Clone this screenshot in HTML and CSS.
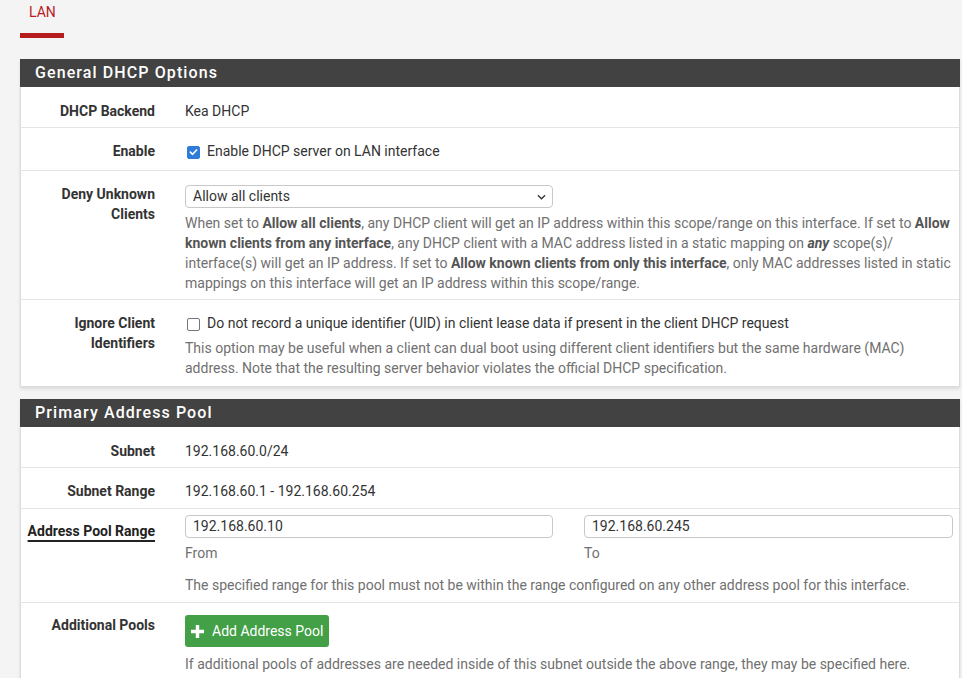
FILE: index.html
```html
<!DOCTYPE html>
<html lang="en">
<head>
<meta charset="utf-8">
<title>DHCP Server: LAN</title>
<link rel="stylesheet" href="styles.css">
</head>
<body>
<div class="page">
  <nav class="tabs">
    <a class="tab active">LAN</a>
  </nav>

  <section class="panel">
    <h2 class="panel-heading">General DHCP Options</h2>
    <div class="panel-body">
      <div class="form-row static-row">
        <div class="label">DHCP Backend</div>
        <div class="content"><div class="static">Kea DHCP</div></div>
      </div>
      <div class="form-row check-row">
        <div class="label">Enable</div>
        <div class="content">
          <label class="check"><span class="box checked"><svg viewBox="0 0 12 12" width="12" height="12"><path d="M2.6 6.2 L5 8.5 L9.4 3.8" fill="none" stroke="#fff" stroke-width="1.8" stroke-linecap="round" stroke-linejoin="round"/></svg></span>Enable DHCP server on LAN interface</label>
        </div>
      </div>
      <div class="form-row tight">
        <div class="label">Deny Unknown Clients</div>
        <div class="content">
          <div class="half">
            <div class="select"><span>Allow all clients</span><svg class="chev" viewBox="0 0 10 6" width="9" height="6"><path d="M1 1 L5 5 L9 1" fill="none" stroke="#333" stroke-width="1.4"/></svg></div>
          </div>
          <p class="help">When set to <b>Allow all clients</b>, any DHCP client will get an IP address within this scope/range on this interface. If set to <b>Allow known clients from any interface</b>, any DHCP client with a MAC address listed in a static mapping on <b><i>any</i></b> scope(s)/ interface(s) will get an IP address. If set to <b>Allow known clients from only this interface</b>, only MAC addresses listed in static mappings on this interface will get an IP address within this scope/range.</p>
        </div>
      </div>
      <div class="form-row last">
        <div class="label">Ignore Client Identifiers</div>
        <div class="content">
          <label class="check"><span class="box"></span>Do not record a unique identifier (UID) in client lease data if present in the client DHCP request</label>
          <p class="help">This option may be useful when a client can dual boot using different client identifiers but the same hardware (MAC) address. Note that the resulting server behavior violates the official DHCP specification.</p>
        </div>
      </div>
    </div>
  </section>

  <section class="panel">
    <h2 class="panel-heading">Primary Address Pool</h2>
    <div class="panel-body">
      <div class="form-row static-row">
        <div class="label">Subnet</div>
        <div class="content"><div class="static">192.168.60.0/24</div></div>
      </div>
      <div class="form-row">
        <div class="label">Subnet Range</div>
        <div class="content"><div class="static">192.168.60.1 - 192.168.60.254</div></div>
      </div>
      <div class="form-row raised">
        <div class="label"><span class="underlined">Address Pool Range</span></div>
        <div class="content">
          <div class="pair">
            <div>
              <div class="input">192.168.60.10</div>
              <div class="sub">From</div>
            </div>
            <div>
              <div class="input">192.168.60.245</div>
              <div class="sub">To</div>
            </div>
          </div>
          <p class="help spaced">The specified range for this pool must not be within the range configured on any other address pool for this interface.</p>
        </div>
      </div>
      <div class="form-row raised">
        <div class="label">Additional Pools</div>
        <div class="content">
          <button class="btn-success" type="button"><svg viewBox="0 0 15 15" width="15" height="15"><path d="M7.5 1 V14 M1 7.5 H14" stroke="#fff" stroke-width="3.4"/></svg>Add Address Pool</button>
          <p class="help btn-help">If additional pools of addresses are needed inside of this subnet outside the above range, they may be specified here.</p>
        </div>
      </div>
    </div>
  </section>
</div>
</body>
</html>
```

FILE: styles.css
```css
* { box-sizing: border-box; }

html, body {
  margin: 0;
  padding: 0;
  background: #f4f4f4;
  font-family: Roboto, "Liberation Sans", sans-serif;
  font-size: 14px;
  line-height: 20px;
  color: #212121;
}

.page {
  padding: 0 0 0 20px;
  width: 960px;
}

.tabs {
  display: flex;
  height: 59px;
  align-items: flex-start;
}

.tab {
  display: block;
  padding: 2px 9px 11px;
  height: 38px;
  width: 44px;
  text-align: center;
  color: #b71c1c;
  font-size: 14px;
  line-height: 20px;
  border-bottom: 5px solid #b71c1c;
}

.panel {
  background: #fff;
  border: 1px solid #dcdcdc;
  border-top: none;
  box-shadow: 0 2px 3px rgba(0,0,0,0.10);
  margin-bottom: 12px;
}

.panel-heading {
  background: #424242;
  color: #fff;
  font-size: 16px;
  font-weight: 500;
  letter-spacing: 1.1px;
  line-height: 28px;
  height: 28px;
  padding: 0 15px;
  margin: 0 -1px;
}

.form-row {
  display: grid;
  grid-template-columns: 149px 1fr;
  padding: 6px 0 7px;
  border-bottom: 1px solid #e4e4e4;
}

.form-row.static-row { padding: 7px 0 6px; }
.form-row.check-row { padding-bottom: 9px; }
.form-row.tight { padding-bottom: 6px; }
.form-row.last { border-bottom: none; padding-bottom: 8px; }
.form-row.raised { padding-top: 5px; padding-bottom: 7px; }

.label {
  text-align: right;
  padding: 7px 15px 0 0;
  font-weight: 700;
  color: #333;
}

.content {
  padding: 0 6px 0 15px;
  min-width: 0;
}

.static {
  padding-top: 7px;
  min-height: 27px;
  color: #333;
}

.check {
  display: flex;
  align-items: center;
  padding-top: 7px;
  color: #333;
}

.box {
  width: 13px;
  height: 13px;
  border: 1.5px solid #767676;
  border-radius: 2px;
  margin: 2px 7px 0 2px;
  display: inline-flex;
  align-items: center;
  justify-content: center;
  flex: none;
}

.box.checked {
  background: #2f7bd9;
  border-color: #2f7bd9;
}

.half {
  width: 368px;
  padding-top: 8px;
}

.select {
  height: 23px;
  border: 1px solid #c8c8c8;
  border-radius: 4px;
  padding: 0 6px 0 7px;
  display: flex;
  align-items: center;
  justify-content: space-between;
  color: #333;
  line-height: 21px;
}

.chev { flex: none; }

.help {
  margin: 5px 0 0;
  color: #707070;
}

.help b { color: #555; }

.help.spaced { margin-top: 12px; }

.pair {
  display: grid;
  grid-template-columns: 368px 369px;
  column-gap: 31px;
  padding-top: 1px;
}

.input {
  height: 23px;
  border: 1px solid #c8c8c8;
  border-radius: 4px;
  padding: 0 7px;
  line-height: 21px;
  color: #333;
}

.sub {
  margin-top: 5px;
  color: #707070;
}

.underlined {
  text-decoration: underline;
  text-decoration-thickness: 1.5px;
  text-underline-offset: 4px;
  color: #222;
}

.btn-success {
  margin-top: 7px;
  display: inline-flex;
  align-items: center;
  gap: 7px;
  height: 32px;
  padding: 0 6px 0 5px;
  background: #43a047;
  border: none;
  border-radius: 3px;
  color: #fff;
  font-family: Roboto, "Liberation Sans", sans-serif;
  font-size: 14px;
  line-height: 20px;
}

.btn-help { margin-top: 7px; }
```
